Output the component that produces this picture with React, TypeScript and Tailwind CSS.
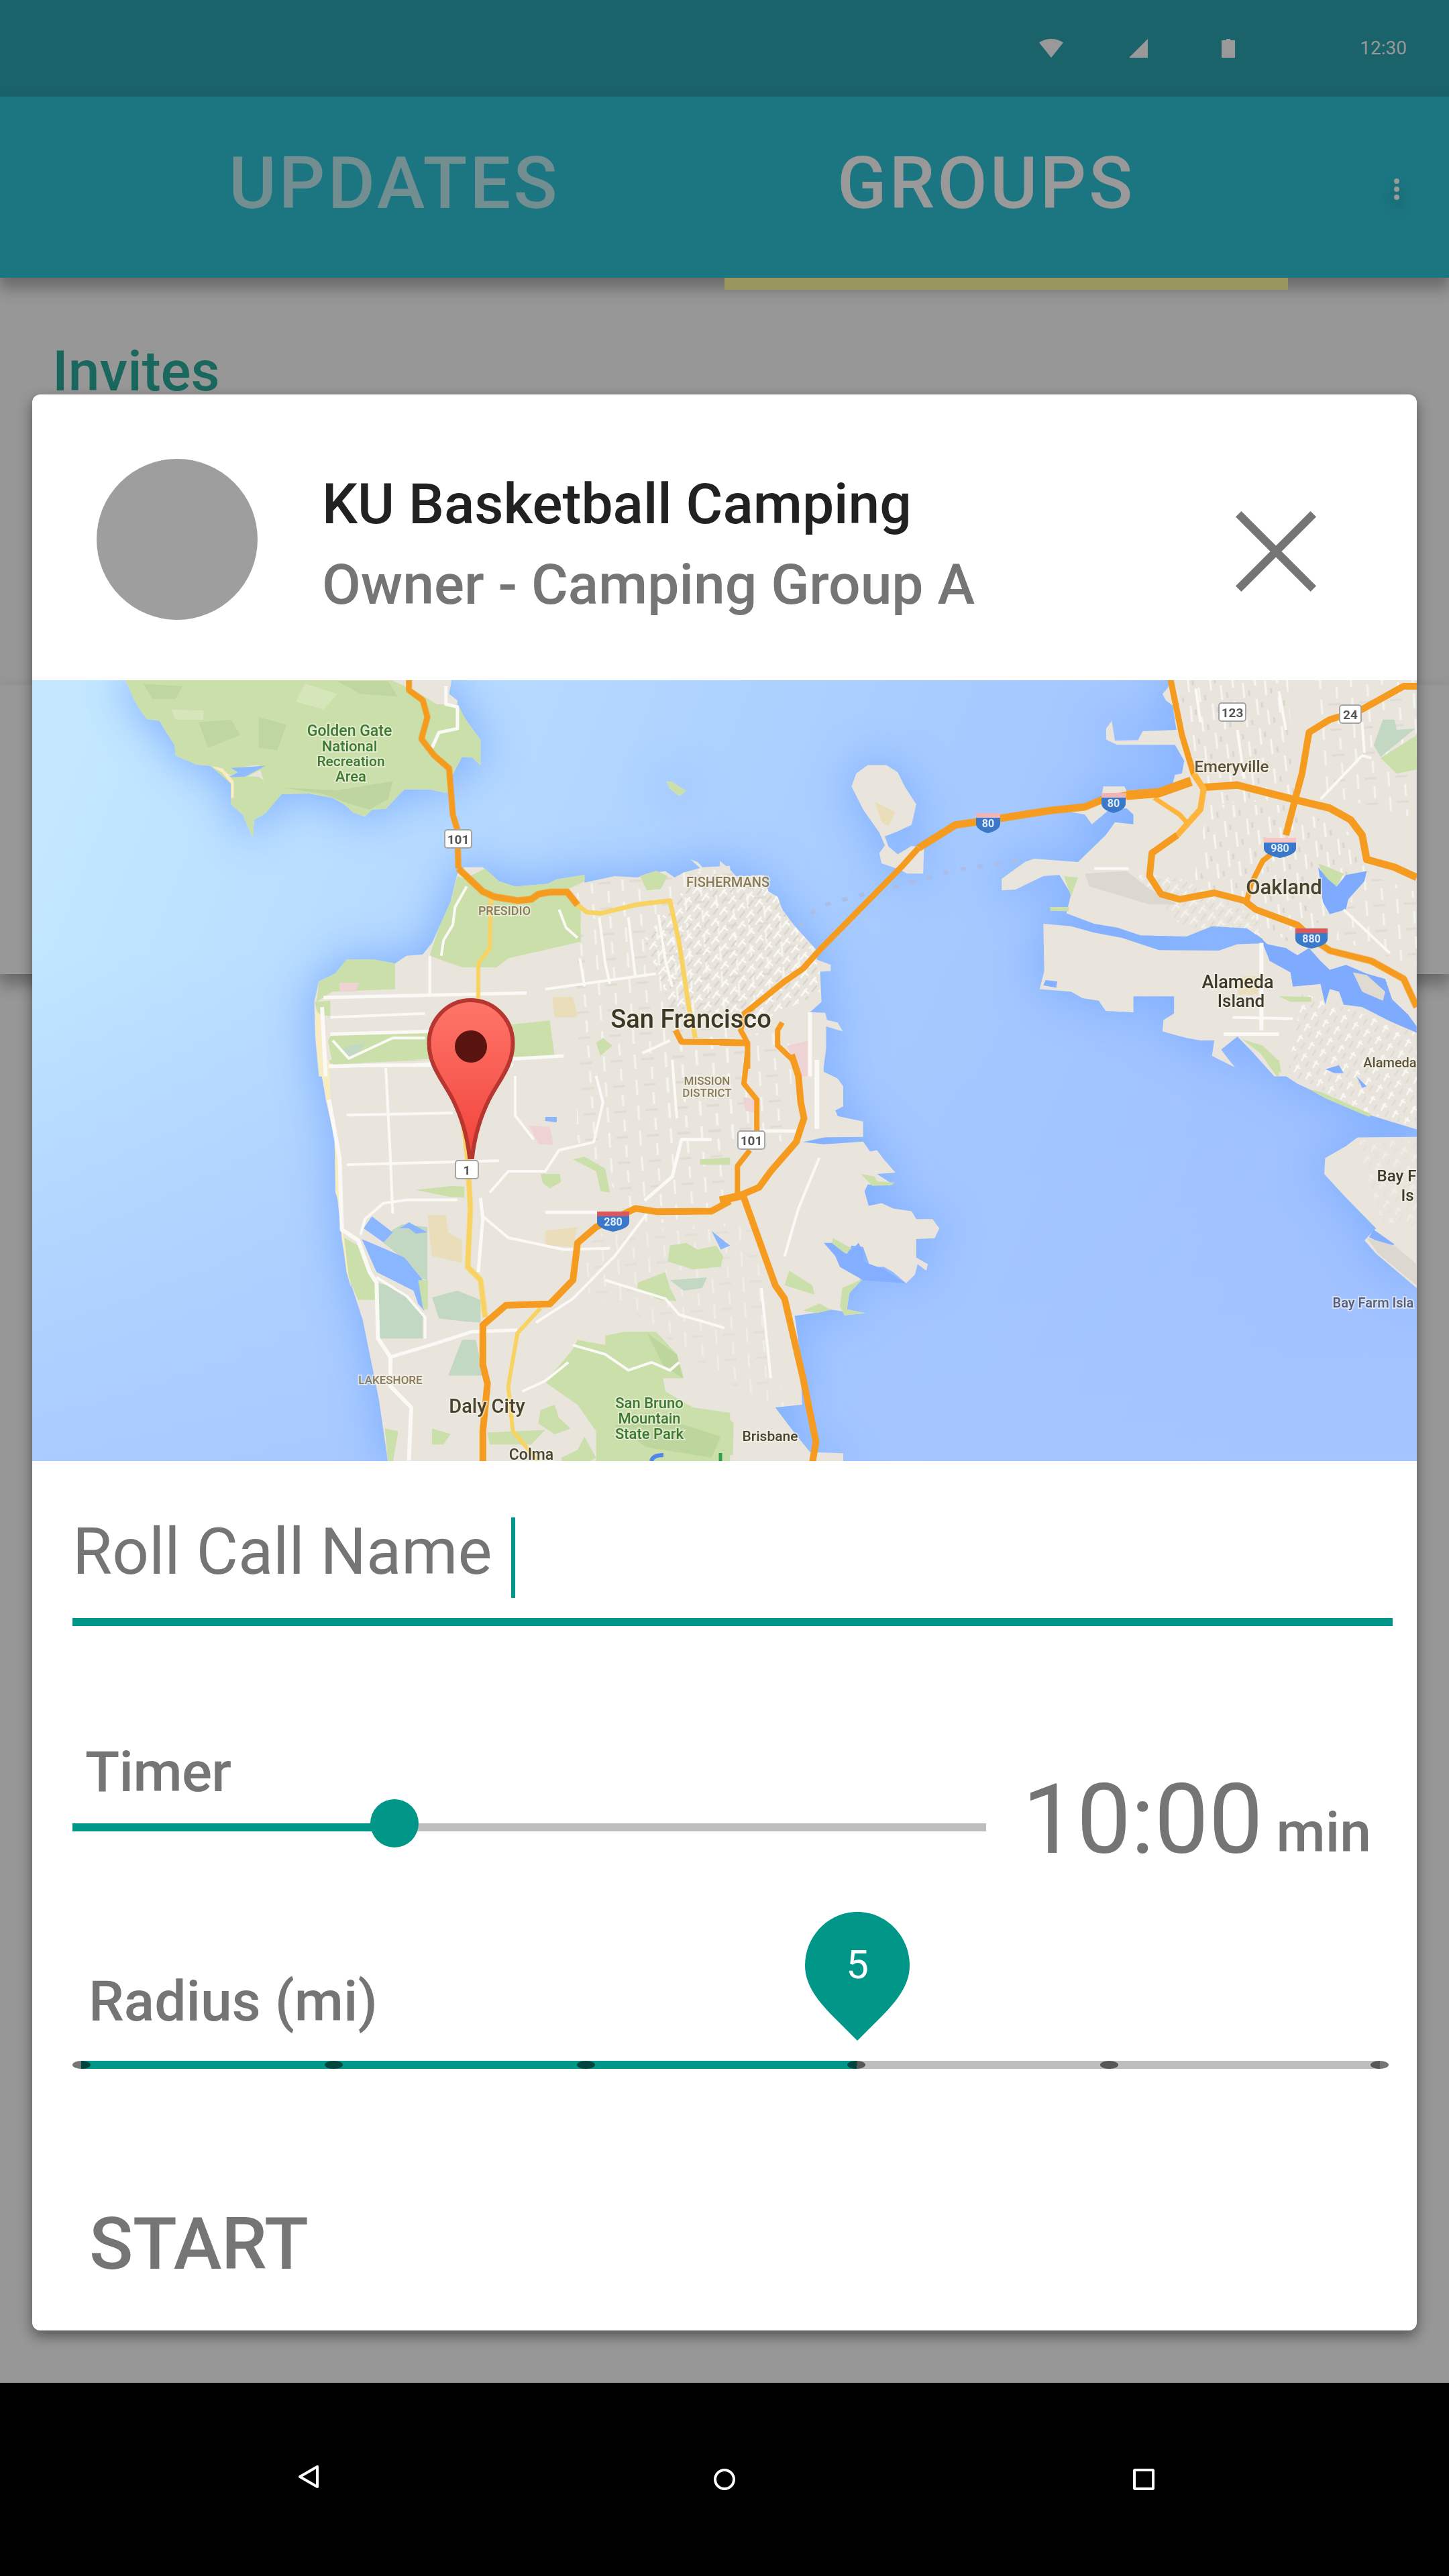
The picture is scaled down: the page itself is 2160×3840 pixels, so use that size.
import type { ReactNode } from 'react';

/* The map is drawn in four quadrants, each with its own local grid. */
const NW = 'matrix(.68876 0 0 .38265 0 1000)';
const NE = 'matrix(.68876 0 0 .38265 1080 1000)';
const SW = 'matrix(.68876 0 0 .39541 0 1580)';
const SE = 'matrix(.68876 0 0 .39541 1080 1580)';

type Shape = { m: string; p: string; c?: string; w?: number };

const LAND: Shape[] = [
  { m: NW, p: '270,30 290,110 300,145 318,188 345,195 360,240 378,290 380,330 425,365 455,370 480,395 500,440 500,520 525,560 547,650 550,580 575,555 605,480 670,478 720,495 745,520 765,553 790,568 805,540 835,538 860,490 875,462 930,462 968,476 975,420 1000,335 1022,338 1040,368 1040,270 1010,195 990,150 990,115 972,90 978,30' },
  { m: NW, p: '1442,430 1456,434 1485,468 1470,488 1450,460' },
  { m: NW, p: '1580,760 1520,765 1510,745 1495,735 1515,768 1480,785 1460,805 1440,780 1400,790 1380,805 1330,800 1265,825 1265,795 1205,812 1185,830 1115,840 1080,820 1045,765 1005,765 990,790 975,900 950,1000 935,1060 915,1105 880,1110 855,1140 810,1125 750,1125 725,1180 690,1210 680,1290 682,1420 690,1580 1580,1580' },
  { m: NE, p: '-10,740 10,770 25,800 50,800 85,795 95,860 115,880 125,930 150,990 200,1090 200,1125 230,1145 230,1170 207,1172 210,1290 185,1330 218,1332 222,1360 245,1370 256,1405 220,1385 220,1470 212,1580 -10,1580' },
  { m: NE, p: '310,367 350,367 375,395 390,450 415,520 405,600 375,625 347,645 355,685 375,715 405,682 432,690 430,790 395,790 380,775 340,750 335,710 347,680 335,630 300,540 275,450 285,400' },
  { m: NE, p: '965,30 960,65 948,90 955,115 970,135 978,230 905,235 895,270 845,272 838,195 826,225 826,268 850,288 975,288 995,350 990,400 975,405 970,440 940,460 870,465 865,450 820,450 815,500 750,550 780,560 795,598 830,545 870,535 885,560 885,598 845,590 825,640 765,745 670,732 650,745 600,810 600,855 630,852 690,800 725,795 750,870 740,945 800,985 850,1000 900,1030 1000,1035 1055,995 1130,1003 1165,1045 1165,1062 1110,1065 1070,1090 940,1088 860,1040 800,1020 750,995 690,985 692,1170 682,1240 750,1250 775,1275 810,1285 825,1325 885,1330 885,1268 973,1268 973,1335 950,1360 948,1405 1000,1430 1030,1440 1060,1440 1055,1500 1105,1545 1085,1500 1075,1475 1110,1425 1140,1480 1190,1580 1498,1580 1498,30' },
  { m: SE, p: '212,-20 215,45 245,70 257,100 257,175 240,190 245,212 300,232 300,290 215,292 170,310 215,318 300,308 315,345 330,340 345,375 370,425 330,430 365,470 310,470 303,495 312,550 340,540 365,560 405,570 415,600 450,600 465,635 455,672 415,675 415,745 440,770 437,795 418,770 412,810 393,842 365,800 345,780 315,780 300,705 275,700 265,730 220,692 240,740 250,780 295,825 270,880 265,940 305,955 260,963 255,948 225,940 210,950 152,965 163,1100 168,1300 110,1310 140,1380 165,1435 185,1478 257,1483 257,1520 -10,1520 -10,-20' },
  { m: SE, p: '1170,-40 1205,50 1240,90 1290,130 1400,210 1498,262 1498,-40' },
  { m: SE, p: '1498,290 1370,292 1345,325 1300,370 1298,430 1340,510 1410,635 1385,680 1410,730 1498,860' },
  { m: SW, p: '690,-20 705,150 725,300 730,520 740,680 755,820 785,980 805,1150 820,1280 840,1520 1580,1520 1580,-20' },
];

const G = '#cbdfab';
const D = '#c3d8c3';
const W = '#84aeff';
const AREAS: Shape[] = [
  { m: NW, c: G, p: '270,30 290,110 300,145 318,188 345,195 360,240 378,290 380,330 425,365 455,370 510,415 535,412 575,375 520,375 560,366 580,480 605,480 670,478 720,495 745,520 765,553 790,568 805,540 835,538 860,490 875,462 930,462 968,476 975,420 1000,335 1022,338 1040,368 1040,270 1010,195 990,130 945,130 900,80 840,30' },
  { m: NW, c: G, p: '455,370 500,410 560,412 610,480 575,555 550,580 547,650 525,560 500,520 500,440' },
  { m: NW, c: '#8ebcff', p: '500,378 575,370 530,412 495,414 515,395' },
  { m: NW, c: '#f7ecc2', p: '455,370 480,395 500,440 500,495 506,495 506,430 482,380' },
  { m: NW, c: '#c0d6a1', p: '310,50 395,60 380,110 330,110' },
  { m: NW, c: '#c0d6a1', p: '560,180 620,210 600,310 560,300' },
  { m: NW, c: '#c0d6a1', p: '730,40 840,40 860,100 780,90' },
  { m: NW, c: '#c0d6a1', p: '430,200 500,190 520,250 450,300' },
  { m: NW, c: '#d6e6bb', p: '370,150 440,155 440,190 380,190' },
  { m: NW, c: '#d6e6bb', p: '660,50 730,90 700,150 640,120' },
  { m: NW, c: '#bfd5a0', p: '610,455 730,465 850,430 840,500 800,540 760,520 700,480' },
  { m: NW, c: G, p: '1442,430 1456,434 1485,468 1470,488 1450,460' },
  { m: NW, c: G, p: '1050,770 1080,820 1115,840 1185,830 1205,812 1265,795 1265,820 1230,850 1257,910 1257,1055 1100,1120 1075,1155 1000,1155 930,1110 950,1000 975,900 990,800 1005,810' },
  { m: NW, c: G, p: '750,1125 810,1125 855,1140 855,1240 720,1250 685,1290 690,1210 725,1180' },
  { m: NW, c: '#efd3d3', p: '735,1215 778,1215 770,1250 735,1250' },
  { m: NW, c: G, p: '680,1290 715,1285 715,1345 690,1340' },
  { m: NW, c: '#f7ecc2', p: '682,1320 694,1340 712,1580 692,1580 684,1450' },
  { m: NW, c: G, p: '710,1440 720,1410 930,1410 1190,1362 1200,1500 940,1510 720,1535' },
  { m: NW, c: D, p: '735,1470 790,1450 770,1500 750,1500' },
  { m: NW, c: G, p: '1385,800 1420,778 1445,800 1430,850 1400,855' },
  { m: NW, c: '#e9ddba', p: '1195,1270 1240,1270 1250,1350 1200,1350' },
  { m: NW, c: G, p: '1290,1450 1305,1430 1325,1460 1300,1500' },
  { m: NE, c: '#e9ddba', p: '325,510 370,550 355,605 340,590' },
  { m: NE, c: '#efd3d3', p: '135,1460 185,1440 185,1580 160,1580' },
  { m: NE, c: '#ddd8cf', p: '780,790 870,780 920,850 980,910 920,910 790,840' },
  { m: NE, c: G, p: '1420,340 1498,250 1498,385 1455,400' },
  { m: NE, c: D, p: '1405,290 1425,190 1450,190 1455,230 1495,225 1420,335' },
  { m: NE, c: G, p: '1285,750 1340,790 1325,840 1300,810' },
  { m: NE, c: '#7fabff', p: '1285,765 1305,810 1325,840 1345,795 1390,780 1385,820 1350,890 1345,930 1310,948 1295,900' },
  { m: NE, c: G, p: '735,800 765,805 750,880' },
  { m: NE, c: G, p: '705,920 745,920 745,937 705,935' },
  { m: NE, c: '#7fabff', p: '1160,1040 1175,1065 1215,1080 1240,1108 1265,1080 1290,1130 1310,1165 1345,1145 1390,1180 1430,1200 1445,1280 1480,1340 1498,1385 1498,1410 1440,1365 1380,1310 1340,1300 1330,1250 1310,1240 1300,1300 1290,1220 1230,1230 1225,1175 1180,1130' },
  { m: NE, c: '#e0dbd0', p: '1360,1175 1390,1185 1430,1250 1425,1285 1380,1250' },
  { m: NE, c: '#84aeff', p: '695,1205 720,1210 718,1235 690,1225' },
  { m: NE, c: G, p: '1200,1268 1270,1270 1270,1290 1225,1290' },
  { m: NE, c: G, p: '1120,1435 1165,1460 1200,1520 1200,1580 1195,1580 1160,1490' },
  { m: NE, c: '#e9ddba', p: '1120,1190 1155,1190 1155,1260 1110,1260' },
  { m: SE, c: G, p: '1170,0 1200,0 1205,50 1190,30' },
  { m: SE, c: W, p: '1300,35 1330,20 1340,50 1320,50' },
  { m: SE, c: W, p: '1368,62 1390,100 1380,105' },
  { m: SE, c: G, p: '1265,110 1290,120 1400,205 1395,215 1300,145' },
  { m: SE, c: W, p: '1405,640 1450,695 1440,705 1395,668' },
  { m: SE, c: '#ddd8cf', p: '1390,670 1450,700 1498,770 1498,850 1415,730' },
  { m: SE, c: G, p: '295,430 325,440 330,458 368,462 360,472 320,475' },
  { m: SE, c: G, p: '235,672 275,710 262,730 232,695' },
  { m: SE, c: G, p: '140,795 190,850 195,885 130,850' },
  { m: SE, c: G, p: '255,860 300,825 270,880 265,940 305,955 260,963 250,930' },
  { m: SE, c: G, p: '170,945 205,918 230,942 200,955' },
  { m: SE, c: G, p: '-2,1330 20,1370 18,1490 -2,1490' },
  { m: SE, c: '#efd3d3', p: '40,140 68,150 65,200 45,190' },
  { m: SE, c: W, p: '215,690 232,690 265,735 290,690 300,720 300,760 345,790 393,842 300,830 250,780 240,740' },
  { m: SW, c: G, p: '710,0 930,0 790,10 715,14' },
  { m: SW, c: '#f7ecc2', p: '690,0 712,0 718,240 730,320 738,560 726,500 724,300 706,150' },
  { m: SW, c: '#f7ecc2', p: '735,600 745,660 760,860 750,800' },
  { m: SW, c: G, p: '745,670 775,700 800,790 818,850 818,905 775,905 755,820' },
  { m: SW, c: D, p: '850,640 870,620 925,630 925,830 905,820 880,760 830,690' },
  { m: SW, c: '#8ab6ff', p: '805,590 850,650 830,688 787,635' },
  { m: SW, c: '#8ab6ff', p: '865,635 885,612 925,650 900,655 885,635' },
  { m: SW, c: '#8ab6ff', p: '783,675 830,710 875,745 915,830 918,945 905,920 895,870 815,800' },
  { m: SW, c: G, p: '905,830 926,830 926,940 916,940' },
  { m: SW, c: D, p: '818,840 860,860 915,950 915,1050 822,1050' },
  { m: SW, c: D, p: '935,895 990,870 1040,905 1040,990 1000,985 950,975' },
  { m: SW, c: D, p: '1000,1055 1030,1055 1045,1190 970,1190' },
  { m: SW, c: '#e9ddba', p: '925,585 965,585 970,650 1000,680 1000,765 935,740' },
  { m: SW, c: '#e9ddba', p: '1180,645 1250,630 1240,705 1180,700' },
  { m: SW, c: '#efd3d3', p: '1145,248 1190,252 1198,320 1165,318' },
  { m: SW, c: '#8ab6ff', p: '1180,215 1205,215 1205,235 1180,230' },
  { m: SW, c: '#8ab6ff', p: '1540,645 1580,700 1560,715' },
  { m: SW, c: G, p: '900,490 980,475 1005,478 1005,520 970,515' },
  { m: SW, c: G, p: '1170,430 1212,430 1214,460 1190,485 1175,465' },
  { m: SW, c: G, p: '1240,375 1265,365 1310,410 1320,500 1300,495 1290,420' },
  { m: SW, c: G, p: '1515,375 1580,368 1580,395 1515,395' },
  { m: SW, c: G, p: '1450,700 1485,690 1510,715 1550,700 1565,740 1560,780 1500,790 1445,760' },
  { m: SW, c: G, p: '1380,840 1440,800 1450,860 1465,910 1430,905 1380,870' },
  { m: SW, c: D, p: '1450,830 1530,820 1520,860 1480,870' },
  { m: SW, c: G, p: '1240,1090 1250,1055 1310,1075 1310,1040 1350,1025 1420,1025 1465,1110 1480,1200 1435,1200 1440,1250 1500,1310 1580,1330 1580,1520 1290,1520 1290,1400 1250,1300 1180,1215' },
  { m: SW, c: '#bdd69d', p: '1400,1030 1465,1110 1478,1200 1435,1150' },
  { m: SW, c: '#bdd69d', p: '1330,1380 1400,1330 1560,1420 1540,1500 1400,1460' },
  { m: SW, c: G, p: '1170,1320 1200,1300 1210,1350 1235,1390 1200,1412 1165,1370' },
  { m: SW, c: G, p: '1055,1405 1180,1395 1150,1450 1060,1450' },
  { m: SW, c: G, p: '935,1390 975,1410 960,1450 935,1450' },
  { m: SW, c: G, p: '833,1390 862,1400 850,1520 840,1520' },
  { m: SW, c: G, p: '1215,1500 1250,1470 1265,1420 1290,1500 1270,1520 1215,1520' },
];

const O = '#f59c20';
const Y = '#f9d362';
const STREETS: Shape[] = [
  { m: NW, w: 5, p: '965,60 965,130 990,140 990,225 950,240 935,300' },
  { m: NW, w: 4, p: '1010,840 985,920 980,990 960,1050 955,1110' },
  { m: NW, w: 4, p: '1210,930 1225,1000 1250,1040' },
  { m: NW, w: 4, p: '930,1110 930,1270' },
  { m: NW, w: 5, p: '700,1273 1140,1255' },
  { m: NW, w: 4, p: '715,1350 920,1335' },
  { m: NW, w: 5, p: '715,1415 930,1405' },
  { m: NW, w: 4, p: '720,1440 755,1510 850,1430 920,1430' },
  { m: NW, w: 5, p: '712,1540 900,1535 1220,1500' },
  { m: NW, w: 6, p: '697,1310 705,1580' },
  { m: NW, w: 4, p: '1297,960 1310,1140 1320,1220' },
  { m: NW, w: 4, p: '1360,960 1375,1190' },
  { m: NW, w: 4, p: '1425,950 1440,1130 1455,1230' },
  { m: NW, w: 4, p: '1180,1240 1420,1180' },
  { m: NW, w: 4, p: '1255,1120 1265,1230' },
  { m: NW, w: 4, p: '1390,1490 1450,1440' },
  { m: NE, w: 6, p: '185,1330 185,1580' },
  { m: NE, w: 6, p: '1162,1060 1162,1400' },
  { m: NE, w: 5, p: '1080,1415 1200,1415' },
  { m: NE, w: 4, p: '1100,1350 1230,1355' },
  { m: NE, w: 4, p: '800,770 875,770' },
  { m: NE, w: 4, p: '1020,70 1030,200' },
  { m: NE, w: 4, p: '1110,230 1125,420' },
  { m: NE, w: 4, p: '1200,80 1215,230' },
  { m: NE, w: 4, p: '1290,500 1380,330 1400,340' },
  { m: NE, w: 4, p: '1380,200 1385,320' },
  { m: NE, w: 4, p: '1340,930 1440,1100' },
  { m: SW, w: 5, p: '712,25 800,20 1110,20' },
  { m: SW, w: 4, p: '835,30 845,370 850,580' },
  { m: SW, w: 4, p: '750,208 980,200' },
  { m: SW, w: 4, p: '750,395 1080,380' },
  { m: SW, w: 6, p: '712,150 735,370 740,640 775,680 800,800 815,840 818,1050 845,1120 845,1230 890,1310 885,1510' },
  { m: SW, w: 4, p: '780,660 790,600 830,540 880,528 990,528' },
  { m: SW, w: 4, p: '815,820 880,890 920,970 920,1050' },
  { m: SW, w: 5, p: '845,1120 940,1070 1020,1025 1120,1018' },
  { m: SW, w: 5, p: '1040,520 1045,600 1035,800' },
  { m: SW, w: 4, p: '1045,590 1100,670 1220,715 1320,710' },
  { m: SW, w: 4, p: '1115,60 1115,210 1155,300' },
  { m: SW, w: 4, p: '1290,60 1305,160 1285,310 1210,340 1180,420 1100,420 1060,500' },
  { m: SW, w: 5, p: '1540,300 1475,300 1455,440 1395,530' },
  { m: SW, w: 4, p: '1400,580 1330,740 1240,900 1160,990' },
  { m: SW, w: 5, p: '1180,575 1300,575' },
  { m: SW, w: 4, p: '1240,1075 1310,1110 1360,1170 1410,1140 1450,1170 1470,1140' },
  { m: SW, w: 4, p: '1130,1250 1180,1210 1230,1140' },
  { m: SW, w: 4, p: '1310,830 1440,900 1470,960 1568,1010' },
  { m: SW, w: 4, p: '1455,0 1465,220' },
  { m: SE, w: 7, p: '200,0 200,260' },
  { m: SE, w: 5, p: '75,268 155,268' },
  { m: SE, w: 4, p: '205,370 160,560 130,740' },
  { m: SE, w: 4, p: '80,860 100,1200' },
];

const ROADS: Shape[] = [
  { m: NW, c: Y, w: 6, p: '1062,880 1060,1080 1035,1140 1035,1300' },
  { m: NW, c: Y, w: 7, p: '1250,912 1270,940 1300,945 1380,910 1450,895 1470,1060 1490,1300 1505,1430' },
  { m: SW, c: Y, w: 8, p: '1000,190 1012,370 1018,560 1012,780 1040,830 1050,970' },
  { m: SW, c: Y, w: 6, p: '1170,935 1120,1030 1100,1230 1110,1400 1165,1512' },
  { m: NE, c: '#fdb53b', w: 7, p: '930,495 985,560 1000,590' },
  { m: NW, c: O, w: 9, p: '885,30 885,75 915,115 925,180 912,265 940,330 972,380 980,560 990,620 992,770' },
  { m: NW, c: O, w: 10, p: '992,770 1045,860 1070,880 1120,895 1150,890 1165,870 1190,862 1228,862 1250,912' },
  { m: NW, c: O, w: 9, p: '1462,1400 1475,1445 1580,1447' },
  { m: NE, c: O, w: 10, p: '-10,1447 50,1450' },
  { m: NE, c: O, w: 8, p: '45,1330 35,1400 50,1450 50,1550' },
  { m: NE, c: O, w: 9, p: '40,1340 130,1210 170,1160 210,1080 385,760 420,690' },
  { m: NE, c: O, w: 11, p: '420,690 500,600 560,585 700,545 780,530 820,500 870,485' },
  { m: NE, c: O, w: 14, p: '870,485 940,475 1010,430' },
  { m: NE, c: O, w: 11, p: '1030,455 1110,445 1230,500 1310,535 1355,580 1380,640 1390,735 1450,765 1498,805' },
  { m: NE, c: O, w: 9, p: '965,30 990,250 1015,400 1037,460' },
  { m: NE, c: '#fdb53b', w: 9, p: '1015,400 1037,460 1030,540 980,640' },
  { m: NE, c: O, w: 10, p: '980,640 925,710 920,800 945,870 985,890 1060,865 1125,895 1150,930 1240,990 1270,1040' },
  { m: NE, c: O, w: 10, p: '1270,1040 1310,1090 1400,1130 1470,1200 1498,1310' },
  { m: NE, c: O, w: 10, p: '1500,60 1470,60 1380,150 1310,190 1265,240 1250,400 1235,500 1215,640' },
  { m: NE, c: O, w: 8, p: '1200,690 1165,740 1140,830 1130,900' },
  { m: NE, c: O, w: 8, p: '125,1370 115,1400 115,1460 150,1520 158,1570' },
  { m: SE, c: O, w: 10, p: '145,-20 160,60 165,160 172,220 155,310 100,420 75,480 35,510' },
  { m: SE, c: O, w: 8, p: '50,-30 42,90 70,150 70,270' },
  { m: SE, c: O, w: 8, p: '55,340 28,400 28,500 35,510' },
  { m: SE, c: O, w: 12, p: '-10,530 40,510' },
  { m: SE, c: O, w: 10, p: '40,510 110,850 130,900 170,1200 198,1440 190,1520' },
  { m: SW, c: O, w: 10, p: '1580,532 1540,570 1420,572 1375,560 1290,630 1250,690 1240,830 1190,920 1095,925 1045,1000 1045,1150 1055,1220 1045,1400 1045,1520' },
];

const LABELS: { x: number; y: number; s: number; c: string; t: string }[] = [
  { x: 521, y: 1097, s: 23, c: '#3b7a2f', t: 'Golden Gate' },
  { x: 521, y: 1120, s: 22, c: '#3b7a2f', t: 'National' },
  { x: 523, y: 1142, s: 21, c: '#3b7a2f', t: 'Recreation' },
  { x: 523, y: 1165, s: 22, c: '#3b7a2f', t: 'Area' },
  { x: 752, y: 1364, s: 18, c: '#8a7a58', t: 'PRESIDIO' },
  { x: 1085, y: 1322, s: 20, c: '#8a7a58', t: 'FISHERMANS' },
  { x: 1030, y: 1532, s: 38, c: '#3d3824', t: 'San Francisco' },
  { x: 1054, y: 1617, s: 17, c: '#8a7a58', t: 'MISSION' },
  { x: 1054, y: 1635, s: 17, c: '#8a7a58', t: 'DISTRICT' },
  { x: 582, y: 2063, s: 17, c: '#8a7a58', t: 'LAKESHORE' },
  { x: 726, y: 2106, s: 29, c: '#4a432d', t: 'Daly City' },
  { x: 792, y: 2176, s: 23, c: '#4a432d', t: 'Colma' },
  { x: 968, y: 2099, s: 22, c: '#3b7a2f', t: 'San Bruno' },
  { x: 968, y: 2122, s: 22, c: '#3b7a2f', t: 'Mountain' },
  { x: 968, y: 2145, s: 22, c: '#3b7a2f', t: 'State Park' },
  { x: 1148, y: 2148, s: 21, c: '#4a432d', t: 'Brisbane' },
  { x: 1836, y: 1151, s: 24, c: '#5d5238', t: 'Emeryville' },
  { x: 1914, y: 1333, s: 31, c: '#4a432d', t: 'Oakland' },
  { x: 1845, y: 1473, s: 27, c: '#3f3b2b', t: 'Alameda' },
  { x: 1850, y: 1501, s: 26, c: '#3f3b2b', t: 'Island' },
  { x: 2072, y: 1591, s: 20, c: '#5d5238', t: 'Alameda' },
  { x: 2082, y: 1761, s: 24, c: '#3f3b2b', t: 'Bay F' },
  { x: 2098, y: 1790, s: 24, c: '#3f3b2b', t: 'Is' },
  { x: 2047, y: 1949, s: 20, c: '#555c7c', t: 'Bay Farm Isla' },
];

function Shields() {
  return (
    <g>
      {[
        [683, 1250, 40, '101'],
        [696, 1743, 34, '1'],
        [1120, 1699, 40, '101'],
        [1837, 1061, 40, '123'],
        [2013, 1064, 32, '24'],
      ].map(([x, y, w, t]) => (
        <g key={`${x}`}>
          <rect x={Number(x) - Number(w) / 2} y={Number(y) - 13} width={w} height={27} rx={4} fill="#fff" stroke="#a5a5a5" strokeWidth={2} />
          <text x={x} y={Number(y) + 8} textAnchor="middle" fontSize={19} fontWeight={700} fill="#555">{t}</text>
        </g>
      ))}
      {[
        [1473, 1226, 18, '80', '#f1b4b4'],
        [1660, 1196, 18, '80', '#f1b4b4'],
        [1908, 1263, 24, '980', '#f6c5c5'],
        [1955, 1398, 24, '880', '#d9585c'],
        [914, 1820, 24, '280', '#d9585c'],
      ].map(([x, y, r, t, c]) => {
        const cx = Number(x);
        const cy = Number(y);
        const w = Number(r);
        return (
          <g key={`${x}`}>
            <path d={`M${cx - w} ${cy - 8}h${2 * w}v10q0 9 -${w} 14q-${w} -5 -${w} -14z`} fill="#3a78c9" />
            <rect x={cx - w} y={cy - 14} width={2 * w} height={7} fill={`${c}`} />
            <text x={cx} y={cy + 7} textAnchor="middle" fontSize={16} fontWeight={700} fill="#e4eefc">{t}</text>
          </g>
        );
      })}
    </g>
  );
}

function Lines({ items, color }: { items: Shape[]; color?: string }) {
  return (
    <g fill="none" strokeLinejoin="round">
      {items.map((s, i) => (
        <polyline key={i} transform={s.m} points={s.p} stroke={color ?? s.c} strokeWidth={s.w} vectorEffect="non-scaling-stroke" />
      ))}
    </g>
  );
}

function BayMap() {
  return (
    <svg className="block h-[1164px] w-full" viewBox="48 1014 2064 1164" fontFamily="Roboto, sans-serif">
      <defs>
        <linearGradient id="sea" x1="0" y1="0.2" x2="1" y2="0.42">
          <stop offset="0" stopColor="#c3e8ff" />
          <stop offset="0.3" stopColor="#b5d9ff" />
          <stop offset="0.6" stopColor="#a7cbff" />
          <stop offset="1" stopColor="#9dbeff" />
        </linearGradient>
        <linearGradient id="deep" x1="0" y1="0" x2="0" y2="1">
          <stop offset="0.35" stopColor="#a3c4ff" stopOpacity="0" />
          <stop offset="1" stopColor="#a5c6ff" stopOpacity="0.8" />
        </linearGradient>
        <linearGradient id="pin" x1="0" y1="0" x2="0" y2="1">
          <stop offset="0" stopColor="#fe7569" />
          <stop offset="1" stopColor="#f2433b" />
        </linearGradient>
        <filter id="soft" filterUnits="userSpaceOnUse" x="0" y="960" width="2200" height="1280">
          <feGaussianBlur stdDeviation="32" />
        </filter>
        <g id="land">
          {LAND.map((s, i) => (
            <polygon key={i} transform={s.m} points={s.p} vectorEffect="non-scaling-stroke" />
          ))}
        </g>
        <clipPath id="coast">
          {LAND.map((s, i) => (
            <polygon key={i} transform={s.m} points={s.p} />
          ))}
        </clipPath>
        <pattern id="downtown" width="17" height="21" patternUnits="userSpaceOnUse" patternTransform="rotate(38)">
          <path d="M2 0V15M0 5H9" stroke="#fbfaf7" strokeWidth="2.5" />
          <path d="M11 9V21" stroke="#d8d4cb" strokeWidth="2.5" />
        </pattern>
        <pattern id="blocks" width="46" height="38" patternUnits="userSpaceOnUse" patternTransform="rotate(-4)">
          <path d="M6 0V22M30 20V38" stroke="#f6f4ef" strokeWidth="3" />
          <path d="M16 8H34" stroke="#dfdbd3" strokeWidth="3" />
        </pattern>
        <pattern id="eastbay" width="33" height="44" patternUnits="userSpaceOnUse" patternTransform="rotate(-6)">
          <path d="M5 0V24M20 18V40" stroke="#f8f6f2" strokeWidth="3" />
          <path d="M12 6V14M28 30V38" stroke="#d9d5cc" strokeWidth="3" />
        </pattern>
        <pattern id="alameda" width="20" height="20" patternUnits="userSpaceOnUse" patternTransform="rotate(32)">
          <path d="M3 0V13M0 4H8" stroke="#faf8f5" strokeWidth="2.5" />
          <path d="M13 8V18" stroke="#dedad1" strokeWidth="2.5" />
        </pattern>
      </defs>

      <rect x="48" y="1014" width="2064" height="1164" fill="url(#sea)" />
      <rect x="48" y="1014" width="2064" height="1164" fill="url(#deep)" />
      <use href="#land" filter="url(#soft)" fill="#80afff" stroke="#80afff" strokeWidth="14" opacity="0.9" />
      <use href="#land" fill="#e9e5dc" />

      <g clipPath="url(#coast)">
        <polygon points="860,1320 1080,1290 1180,1350 1225,1420 1120,1520 1080,1800 960,1830 860,1700" fill="url(#blocks)" />
        <polygon points="1040,1300 1140,1310 1222,1430 1222,1480 1120,1530 1000,1500 960,1400" fill="url(#downtown)" />
        <polygon points="970,1540 1180,1540 1180,1700 980,1720" fill="url(#blocks)" />
        <polygon points="880,1840 1120,1820 1170,2100 1080,2060 950,1960 860,1920" fill="url(#blocks)" opacity="0.6" />
        <polygon points="1750,1014 1920,1014 1930,1190 1800,1200" fill="url(#eastbay)" />
        <polygon points="1960,1014 2112,1014 2112,1220 1960,1180" fill="url(#blocks)" />
        <polygon points="1800,1200 1920,1200 2010,1240 2040,1300 1930,1410 1780,1310" fill="url(#eastbay)" />
        <polygon points="1690,1300 1760,1310 1880,1370 1880,1395 1760,1380" fill="url(#downtown)" opacity="0.6" />
        <polygon points="2030,1300 2112,1330 2112,1440 1990,1400" fill="url(#blocks)" />
        <polygon points="1940,1480 2112,1540 2112,1680 2040,1660 1920,1600" fill="url(#alameda)" />
        <polygon points="2020,1700 2112,1700 2112,1830 2060,1820" fill="url(#alameda)" opacity="0.4" />
      </g>

      {AREAS.map((s, i) => (
        <polygon key={i} transform={s.m} points={s.p} fill={s.c} />
      ))}

      <polyline points="1192,1382 1205,1365 1225,1350 1280,1335 1350,1318 1420,1298 1520,1282" fill="none" stroke="#a9bde6" strokeWidth="6" strokeDasharray="8 18" />
      <Lines items={STREETS} color="#fbf9f6" />
      <Lines items={ROADS} />
      <Shields />
      {LABELS.map((l, i) => (
        <text key={i} x={l.x} y={l.y} fontSize={l.s} fontWeight={500} fill={l.c} textAnchor="middle" stroke="#f4f1ea" strokeWidth={4} strokeOpacity={0.6} paintOrder="stroke">
          {l.t}
        </text>
      ))}
      <path d="M971 2178q2-9 18-9" fill="none" stroke="#4e86ec" strokeWidth="6" />
      <path d="M1074 2166v12" stroke="#2ea04a" strokeWidth="5" />

      <path
        d="M702 1491c-35 0-62.500 29-62.500 64c0 33 19 53 35 83c14 28 22 55 25.500 87h4c3.500-32 11.500-59 25.500-87c16-30 35-50 35-83c0-35-27.500-64-62.500-64z"
        fill="url(#pin)"
        stroke="#b73630"
        strokeWidth="6"
      />
      <circle cx="702" cy="1560" r="24" fill="#591410" />
    </svg>
  );
}

function StatusBar() {
  return (
    <div className="flex h-[144px] items-center justify-end bg-[#1a636b] pr-[63px] text-[#999999]">
      <svg className="h-7 w-9" viewBox="0 0 36 28" fill="currentColor">
        <path d="M18 28 0 5.500C5 2 11 0 18 0s13 2 18 5.500z" />
      </svg>
      <svg className="ml-[98px] h-7 w-7" viewBox="0 0 28 28" fill="currentColor">
        <path d="M28 0v28H0z" />
      </svg>
      <svg className="ml-[110px] h-7 w-5" viewBox="0 0 20 28" fill="currentColor">
        <path d="M7 0h6v2h7v26H0V2h7z" />
      </svg>
      <span className="ml-[186px] text-[28px] leading-none">12:30</span>
    </div>
  );
}

function TabBar() {
  return (
    <div className="relative z-10 flex h-[270px] bg-[#1b7682] text-[108px] leading-none font-medium tracking-[3.9px] shadow-[0_14px_22px_2px_rgba(0,0,0,0.3)]">
      <div className="w-[1080px] pt-[75px] pl-[341px] text-[#728e91]">UPDATES</div>
      <div className="relative w-[840px] pt-[75px] pl-[168px] text-[#999999]">
        GROUPS
        <div className="absolute top-full left-0 h-[18px] w-full bg-[#99975e]" />
      </div>
      <div className="flex flex-1 justify-center pt-[122px] pl-[84px]">
        <div className="flex flex-col gap-1 drop-shadow-[0_12px_10px_rgba(0,0,0,0.35)]">
          <i className="size-2 rounded-full bg-[#999999]" />
          <i className="size-2 rounded-full bg-[#999999]" />
          <i className="size-2 rounded-full bg-[#999999]" />
        </div>
      </div>
    </div>
  );
}

function NavBar() {
  return (
    <div className="flex h-[288px] items-center bg-black">
      <svg className="mt-[-8px] ml-[444px] h-9 w-8" viewBox="0 0 32 36" fill="none" stroke="#fff" strokeWidth="4" strokeLinejoin="round">
        <path d="M29 3v30L3 18z" />
      </svg>
      <div className="ml-[588px] size-8 rounded-full border-4 border-white" />
      <div className="ml-[593px] size-8 rounded-[3px] border-4 border-white" />
    </div>
  );
}

function DialogHeader() {
  return (
    <div className="flex h-[426px] pr-[150px] pl-24">
      <div className="mt-24 size-[240px] rounded-full bg-[#9e9e9e]" />
      <div className="mt-26 ml-24 text-[84px] leading-[120px] font-medium whitespace-nowrap">
        <div className="text-[#212121]">KU Basketball Camping</div>
        <div className="text-[#757575]">Owner - Camping Group A</div>
      </div>
      <svg className="mt-[174px] ml-auto size-[120px]" viewBox="0 0 120 120" stroke="#757575" strokeWidth="12">
        <path d="M4.200 4.200 115.800 115.800M115.800 4.200 4.200 115.800" />
      </svg>
    </div>
  );
}

function Tick({ children }: { children?: ReactNode }) {
  return <div className="relative h-3 w-[27px] rounded-[50%] bg-black/54">{children}</div>;
}

function RadiusSlider() {
  return (
    <div className="relative mt-[46px] h-3 w-[1962px]">
      <div className="flex h-full px-[13px]">
        <div className="w-[1156px] bg-[#009688]" />
        <div className="flex-1 bg-[#bdbdbd]" />
      </div>
      <div className="absolute inset-0 flex">
        <Tick />
        <div className="w-[349px]" />
        <Tick />
        <div className="w-[349px]" />
        <Tick />
        <div className="w-[376px]" />
        <Tick>
          <div className="absolute bottom-[42px] left-[-63px] h-[192px] w-[156px]">
            <svg className="absolute inset-0" viewBox="0 0 156 192" fill="#009688">
              <path d="M78 0C35 0 0 36 0 80C0 111 22 135 40 154L78 192L116 154C134 135 156 111 156 80C156 36 121 0 78 0z" />
            </svg>
            <div className="relative pt-[49px] text-center text-[60px] leading-none text-white">5</div>
          </div>
        </Tick>
        <div className="w-[350px]" />
        <Tick />
        <div className="flex-1" />
        <Tick />
      </div>
    </div>
  );
}

function DialogForm() {
  return (
    <div className="flex flex-1 flex-col pr-9 pl-[60px] leading-none text-[#757575]">
      <div className="box-content flex h-[234px] border-b-[12px] border-[#009688]">
        <span className="mt-[87px] text-[96px]">Roll Call Name</span>
        <div className="mt-[84px] ml-[29px] h-[120px] w-1.5 bg-[#009688]" />
      </div>

      <div className="mt-[174px] flex h-[156px] font-medium">
        <div className="w-[1362px]">
          <div className="h-[84px] pt-0.5 pl-[19px] text-[84px] leading-none tracking-[-0.6px]">Timer</div>
          <div className="relative flex h-[72px] items-center pt-3">
            <div className="h-3 w-[480px] bg-[#009688]" />
            <div className="h-3 flex-1 bg-[#bdbdbd]" />
            <div className="absolute top-0 left-[444px] size-[72px] rounded-full bg-[#009688]" />
          </div>
        </div>
        <div className="mt-[43px] ml-[54px] text-[144px] font-normal">10:00</div>
        <div className="mt-[92px] ml-5 text-[84px]">min</div>
      </div>

      <div className="mt-47 pl-6 text-[84px] font-medium">Radius (mi)</div>
      <RadiusSlider />

      <div className="mt-[207px] pl-[25px] text-[108px] font-medium tracking-[-0.3px]">START</div>
    </div>
  );
}

export default function App() {
  return (
    <div className="relative flex h-[3840px] w-[2160px] flex-col overflow-hidden bg-[#979797] font-[Roboto,sans-serif]">
      <StatusBar />
      <TabBar />
      <div className="flex-1">
        <div className="h-[606px] pt-[98px] pl-[78px] text-[84px] leading-none font-medium text-[#1a675d]">Invites</div>
        <div className="h-[432px] border-t-2 border-[#939393] bg-[#989898] shadow-[0_14px_22px_2px_rgba(0,0,0,0.3)]" />
      </div>
      <NavBar />

      <div className="absolute inset-x-12 top-[588px] z-20 flex h-[2886px] flex-col rounded-xl bg-white shadow-[0_8px_20px_rgba(0,0,0,0.45)]">
        <DialogHeader />
        <BayMap />
        <DialogForm />
      </div>
    </div>
  );
}
